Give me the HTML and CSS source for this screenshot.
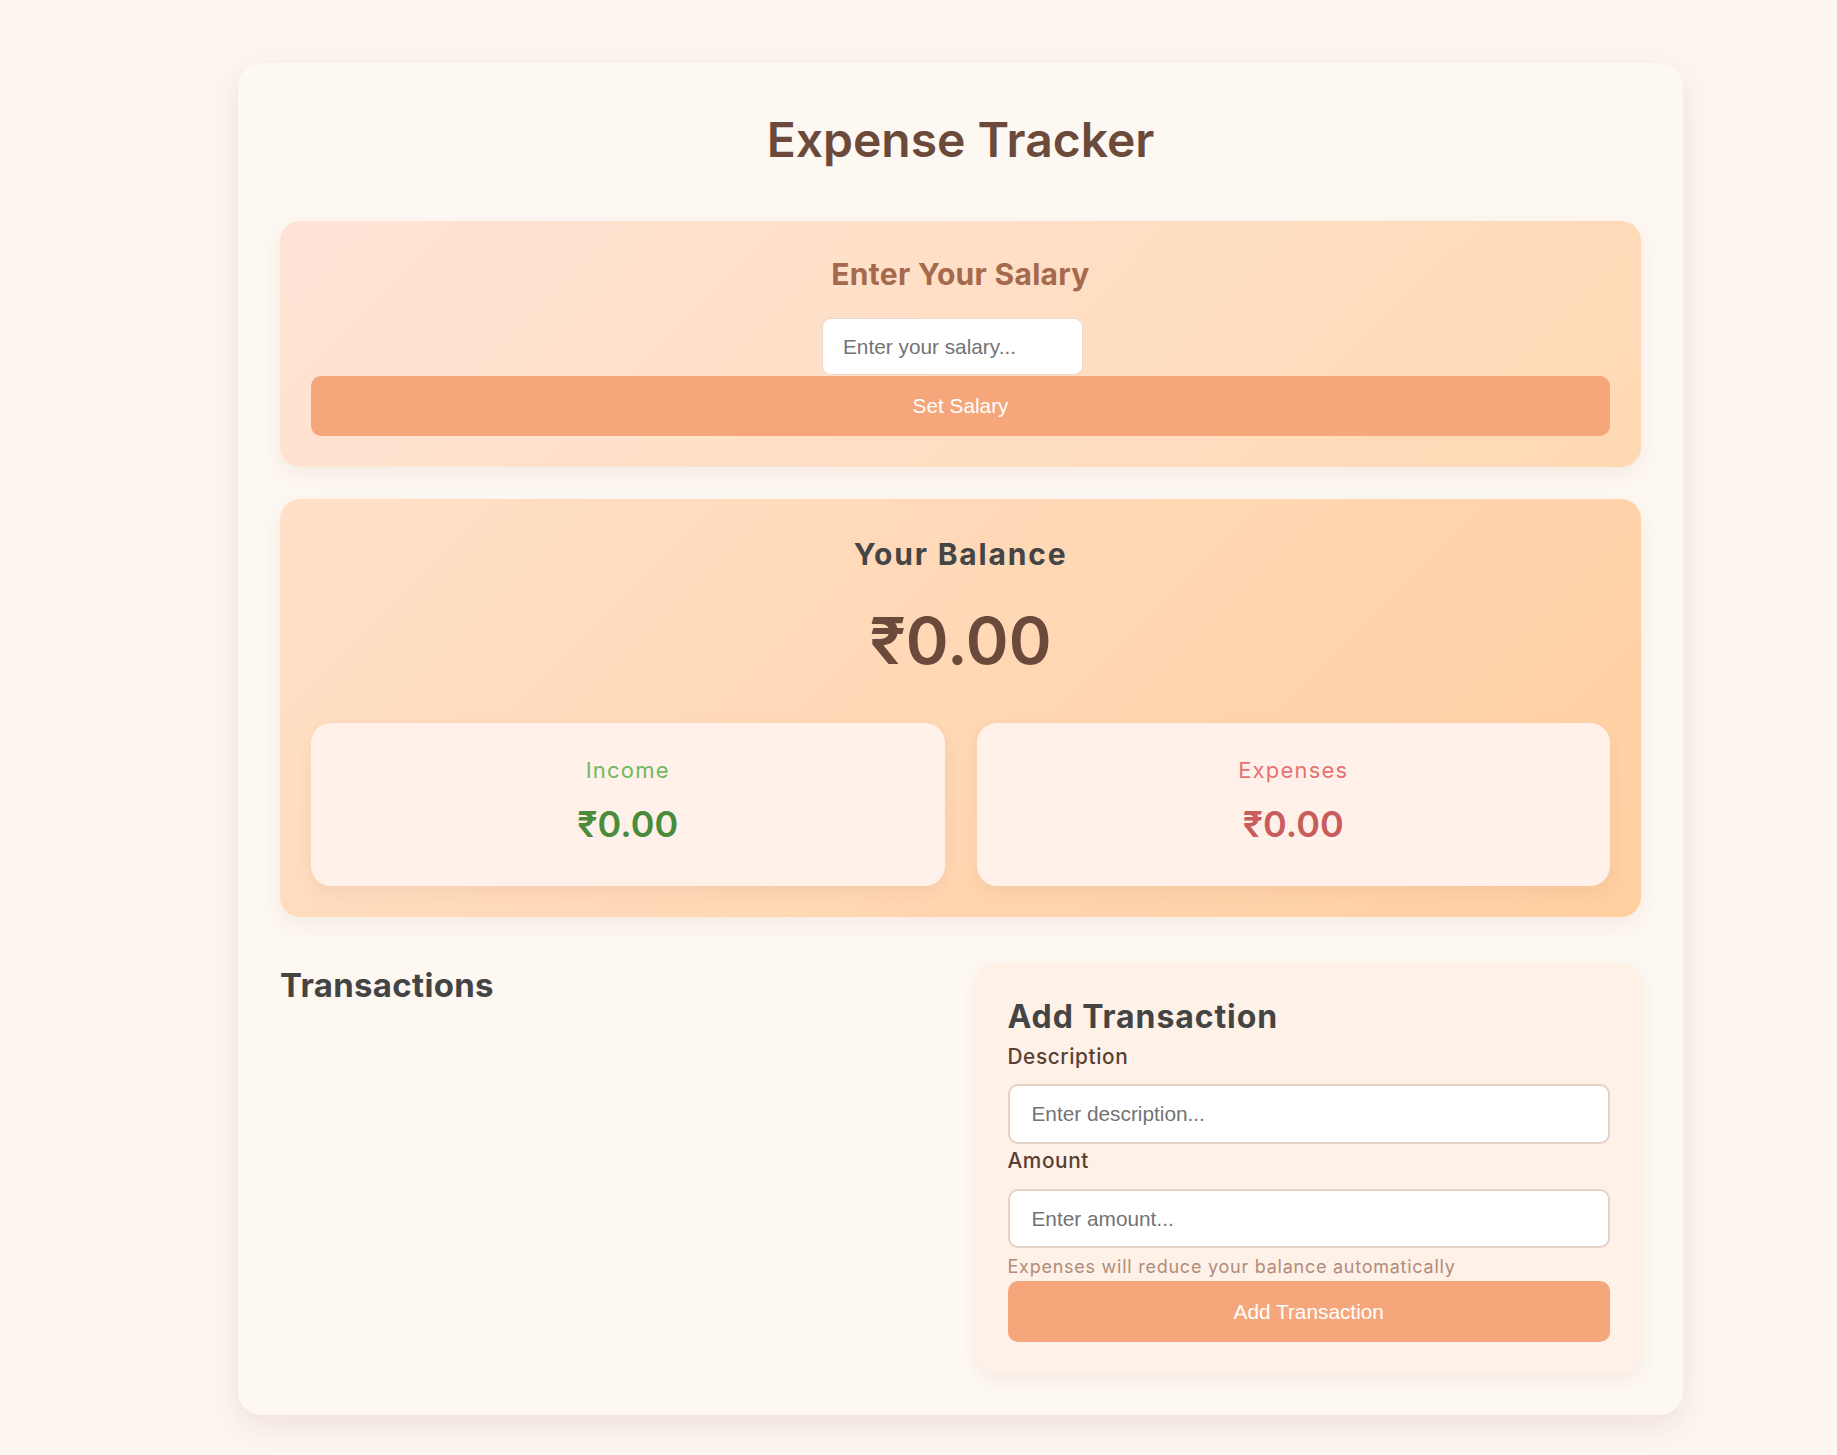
FILE: index.html
```html
<!DOCTYPE html>
<html lang="en">
<head>
<meta charset="utf-8">
<title>Expense Tracker</title>
<link rel="stylesheet" href="styles.css">
</head>
<body>
<div class="app">
  <h1 class="title">Expense Tracker</h1>

  <section class="salary-card">
    <h2 class="salary-title">Enter Your Salary</h2>
    <div class="salary-row">
      <input class="salary-input" type="number" placeholder="Enter your salary...">
    </div>
    <button class="btn btn-salary">Set Salary</button>
  </section>

  <section class="balance-card">
    <h2 class="balance-title">Your Balance</h2>
    <div class="balance-value">₹0.00</div>
    <div class="stats">
      <div class="stat">
        <div class="stat-label income-label">Income</div>
        <div class="stat-value income-value">₹0.00</div>
      </div>
      <div class="stat">
        <div class="stat-label expense-label">Expenses</div>
        <div class="stat-value expense-value">₹0.00</div>
      </div>
    </div>
  </section>

  <div class="lower">
    <div class="transactions">
      <h2 class="transactions-title">Transactions</h2>
    </div>
    <form class="add-card">
      <h3 class="add-title">Add Transaction</h3>
      <label class="field-label">Description</label>
      <input class="field-input" type="text" placeholder="Enter description...">
      <label class="field-label field-label-2">Amount</label>
      <input class="field-input field-input-2" type="number" placeholder="Enter amount...">
      <p class="hint">Expenses will reduce your balance automatically</p>
      <button class="btn btn-add" type="button">Add Transaction</button>
    </form>
  </div>
</div>
</body>
</html>
```

FILE: styles.css
```css
* { box-sizing: border-box; }

body {
  margin: 0;
  background: #fdf5ef;
  font-family: Inter, "Noto Sans", sans-serif;
}

.app {
  width: 1445px;
  margin: 63px 0 40px 238px;
  padding: 42px;
  background: #fef8f2;
  border-radius: 24px;
  box-shadow: 0 10px 30px rgba(110, 70, 50, 0.10);
}

.title {
  margin: 6px 0 52px;
  font-size: 48px;
  line-height: 58px;
  font-weight: 600;
  color: #6b4a3b;
  text-align: center;
}

.salary-card {
  padding: 31px;
  border-radius: 20px;
  background: linear-gradient(135deg, #ffe4d6 0%, #ffd9b3 100%);
  box-shadow: 0 8px 20px rgba(110, 70, 50, 0.07);
  text-align: center;
}

.salary-title {
  margin: 4px 0 26px;
  font-size: 30px;
  line-height: 36px;
  font-weight: 700;
  letter-spacing: 0.3px;
  color: #a5694d;
}

.salary-row {
  display: flex;
  justify-content: center;
}

.salary-input {
  width: 261px;
  height: 57px;
  margin-right: 16px;
  padding: 0 20px;
  border: 1px solid #ead8cc;
  border-radius: 9px;
  background: #fff;
  font-family: "Liberation Sans", Arial, sans-serif;
  font-size: 20.8px;
  color: #333;
  outline: none;
}

.salary-input::placeholder,
.field-input::placeholder {
  color: #737373;
}

.btn {
  display: block;
  width: 100%;
  border: none;
  border-radius: 10px;
  background: #f5a77b;
  color: #fff;
  font-family: "Liberation Sans", Arial, sans-serif;
  font-size: 20.8px;
  cursor: pointer;
}

.btn-salary {
  height: 60px;
  margin-top: 1px;
}

.balance-card {
  margin-top: 32px;
  padding: 31px;
  border-radius: 20px;
  background: linear-gradient(135deg, #ffe0c8 0%, #ffcfa0 100%);
  box-shadow: 0 8px 20px rgba(110, 70, 50, 0.07);
  text-align: center;
}

.balance-title {
  margin: 6px 0 30px;
  font-size: 30px;
  line-height: 36px;
  font-weight: 700;
  letter-spacing: 1.8px;
  color: #454545;
}

.balance-value {
  font-size: 65px;
  line-height: 78px;
  font-weight: 600;
  color: #6b4a3b;
}

.stats {
  margin-top: 43px;
  display: grid;
  grid-template-columns: 1fr 1fr;
  gap: 32px;
}

.stat {
  height: 163px;
  padding: 31px 20px 0;
  border-radius: 20px;
  background: #fff1e9;
  box-shadow: 0 6px 16px rgba(110, 70, 50, 0.07);
}

.stat-label {
  font-size: 22px;
  line-height: 33px;
  font-weight: 400;
  letter-spacing: 1.2px;
}

.stat-value {
  margin-top: 15px;
  font-size: 36px;
  line-height: 44px;
  font-weight: 600;
}

.income-label { color: #70b862; }
.income-value { color: #4a8c3a; }
.expense-label { color: #e57373; }
.expense-value { color: #c95c5c; }

.lower {
  margin-top: 46px;
  display: grid;
  grid-template-columns: 1fr 1fr;
  gap: 32px;
  align-items: start;
}

.transactions-title {
  margin: 2px 0 0;
  font-size: 33px;
  line-height: 40px;
  font-weight: 700;
  letter-spacing: 0.3px;
  color: #444;
}

.add-card {
  display: flex;
  flex-direction: column;
  margin: 0;
  padding: 31px;
  border-radius: 20px;
  background: #fef1e8;
  box-shadow: 0 6px 18px rgba(110, 70, 50, 0.08);
}

.add-title {
  margin: 4px 0 0;
  font-size: 32px;
  line-height: 38px;
  font-weight: 700;
  letter-spacing: 0.9px;
  color: #444;
}

.field-label {
  margin-top: 5px;
  font-size: 20.8px;
  line-height: 31px;
  font-weight: 500;
  letter-spacing: 0.6px;
  color: #5a3f33;
}

.field-label-2 { margin-top: 1px; }

.field-input {
  margin-top: 12px;
  height: 60px;
  padding: 0 22px;
  border: 2px solid #e5d1c6;
  border-radius: 10px;
  background: #fff;
  font-family: "Liberation Sans", Arial, sans-serif;
  font-size: 20.8px;
  color: #333;
  outline: none;
}

.field-input-2 {
  margin-top: 13px;
  height: 59px;
}

.hint {
  margin: 9px 0 0;
  font-size: 18px;
  line-height: 20px;
  letter-spacing: 0.75px;
  color: #b38b78;
}

.btn-add {
  height: 61px;
  margin-top: 4px;
}
```
